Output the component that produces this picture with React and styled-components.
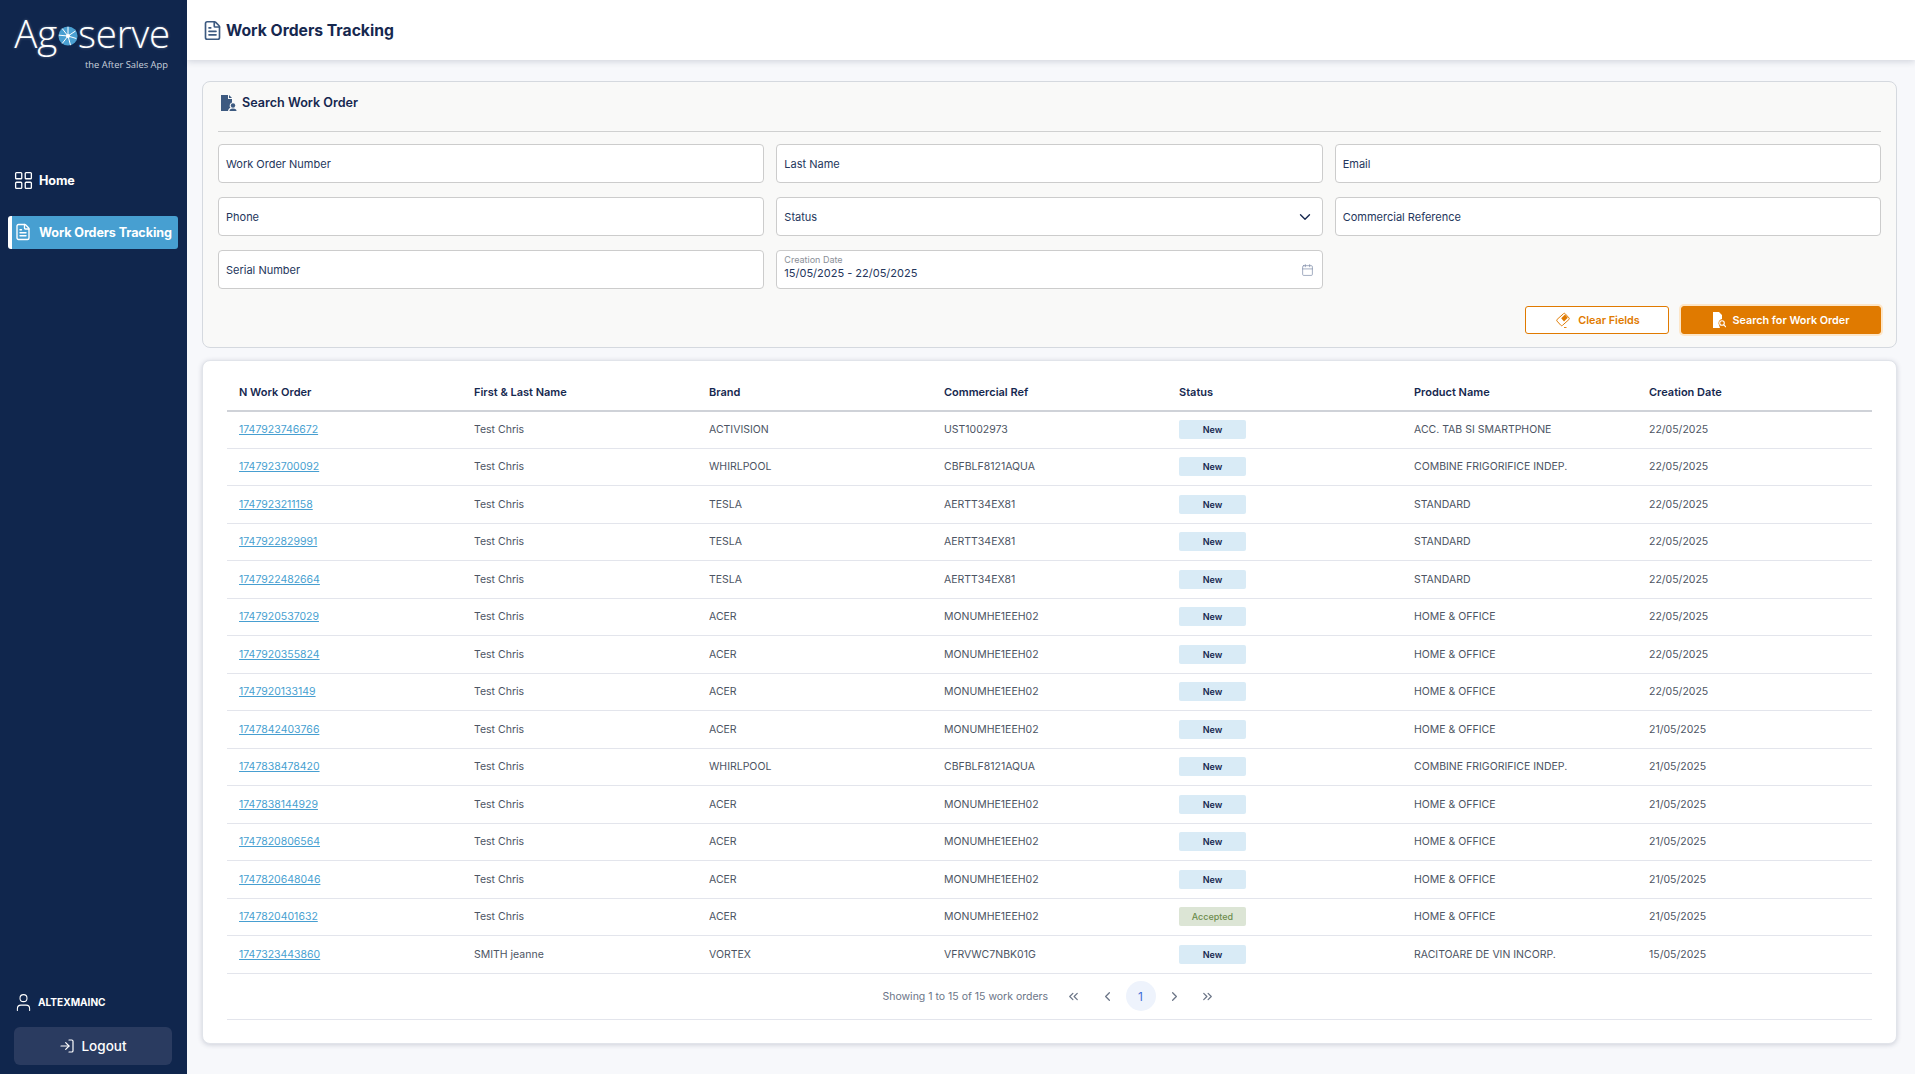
import styled, { createGlobalStyle } from "styled-components";
import {
  Calendar,
  ChevronDown,
  ChevronLeft,
  ChevronRight,
  ChevronsLeft,
  ChevronsRight,
  FileText,
  LayoutGrid,
  LogIn,
  User,
} from "lucide-react";

const orders = [
  ["1747923746672", "Test Chris", "ACTIVISION", "UST1002973", "New", "ACC. TAB SI SMARTPHONE", "22/05/2025"],
  ["1747923700092", "Test Chris", "WHIRLPOOL", "CBFBLF8121AQUA", "New", "COMBINE FRIGORIFICE INDEP.", "22/05/2025"],
  ["1747923211158", "Test Chris", "TESLA", "AERTT34EX81", "New", "STANDARD", "22/05/2025"],
  ["1747922829991", "Test Chris", "TESLA", "AERTT34EX81", "New", "STANDARD", "22/05/2025"],
  ["1747922482664", "Test Chris", "TESLA", "AERTT34EX81", "New", "STANDARD", "22/05/2025"],
  ["1747920537029", "Test Chris", "ACER", "MONUMHE1EEH02", "New", "HOME & OFFICE", "22/05/2025"],
  ["1747920355824", "Test Chris", "ACER", "MONUMHE1EEH02", "New", "HOME & OFFICE", "22/05/2025"],
  ["1747920133149", "Test Chris", "ACER", "MONUMHE1EEH02", "New", "HOME & OFFICE", "22/05/2025"],
  ["1747842403766", "Test Chris", "ACER", "MONUMHE1EEH02", "New", "HOME & OFFICE", "21/05/2025"],
  ["1747838478420", "Test Chris", "WHIRLPOOL", "CBFBLF8121AQUA", "New", "COMBINE FRIGORIFICE INDEP.", "21/05/2025"],
  ["1747838144929", "Test Chris", "ACER", "MONUMHE1EEH02", "New", "HOME & OFFICE", "21/05/2025"],
  ["1747820806564", "Test Chris", "ACER", "MONUMHE1EEH02", "New", "HOME & OFFICE", "21/05/2025"],
  ["1747820648046", "Test Chris", "ACER", "MONUMHE1EEH02", "New", "HOME & OFFICE", "21/05/2025"],
  ["1747820401632", "Test Chris", "ACER", "MONUMHE1EEH02", "Accepted", "HOME & OFFICE", "21/05/2025"],
  ["1747323443860", "SMITH jeanne", "VORTEX", "VFRVWC7NBK01G", "New", "RACITOARE DE VIN INCORP.", "15/05/2025"],
];

const columns = ["N Work Order", "First & Last Name", "Brand", "Commercial Ref", "Status", "Product Name", "Creation Date"];

const App = () => {
  return (
    <>
      <GlobalStyle />
      <Page>
        <Sidebar>
          <Logo>
            <LogoName>
              Ag
              <LogoBall viewBox="0 0 24 24">
                <circle cx="12" cy="12" r="11.5" fill="#4a9fd1" />
                <path d="M12 12L12 1M12 12L21 6M12 12L22 15M12 12L15 23M12 12L5 21M12 12L1 11M12 12L5 3" stroke="#fff" strokeWidth="1.2" />
                <circle cx="12" cy="12" r="2.5" fill="#fff" />
              </LogoBall>
              serve
            </LogoName>
            <LogoTag>the After Sales App</LogoTag>
          </Logo>
          <Menu>
            <MenuItem>
              <LayoutGrid size={21} strokeWidth={1.5} />
              Home
            </MenuItem>
            <MenuItem $active>
              <FileText size={18} strokeWidth={1.8} />
              Work Orders Tracking
            </MenuItem>
          </Menu>
          <SideFooter>
            <UserRow>
              <User size={21} strokeWidth={1.2} />
              ALTEXMAINC
            </UserRow>
            <LogoutButton>
              <LogIn size={16} strokeWidth={1.8} />
              Logout
            </LogoutButton>
          </SideFooter>
        </Sidebar>
        <Main>
          <TopBar>
            <FileText size={21} strokeWidth={1.9} color="#3d5a80" />
            <PageTitle>Work Orders Tracking</PageTitle>
          </TopBar>
          <Content>
            <SearchCard>
              <CardHeader>
                <DocUserIcon viewBox="0 0 16 18">
                  <path d="M0 1h7v4h4v3.4a3.4 3.4 0 0 0-1.6 5.4C8 14.4 7.2 15.5 7 17H0z" fill="#3d5a80" />
                  <path d="M8 1l3 3H8z" fill="#3d5a80" />
                  <circle cx="12" cy="11.5" r="2.2" fill="#3d5a80" />
                  <path d="M8.5 17c0-1.8 1-2.6 3.5-2.6s3.5.8 3.5 2.6z" fill="#3d5a80" />
                </DocUserIcon>
                <CardTitle>Search Work Order</CardTitle>
              </CardHeader>
              <FieldGrid>
                <Field>Work Order Number</Field>
                <Field>Last Name</Field>
                <Field>Email</Field>
                <Field>Phone</Field>
                <Field>
                  Status
                  <FieldIcon>
                    <ChevronDown size={18} strokeWidth={1.8} color="#16284f" />
                  </FieldIcon>
                </Field>
                <Field>Commercial Reference</Field>
                <Field>Serial Number</Field>
                <DateField>
                  <DateLabel>Creation Date</DateLabel>
                  15/05/2025 - 22/05/2025
                  <FieldIcon>
                    <Calendar size={13} strokeWidth={1.3} color="#7d8ca8" />
                  </FieldIcon>
                </DateField>
              </FieldGrid>
              <Actions>
                <ClearButton>
                  <svg width="18" height="18" viewBox="0 0 18 18">
                    <rect x="3.5" y="4.5" width="11" height="8" rx="1.2" transform="rotate(-42 9 8.5)" fill="none" stroke="#e07a00" strokeWidth="0.9" />
                    <path d="M11 3.6L13.8 6.8 10 10.4 7.2 7.2z" fill="#e07a00" />
                    <path d="M10 16.5h2.5" stroke="#e07a00" strokeWidth="0.9" />
                  </svg>
                  Clear Fields
                </ClearButton>
                <SearchButton>
                  <svg width="14" height="16" viewBox="0 0 14 16">
                    <path d="M1 0h6l3 3v4a4 4 0 0 0-3 6l1 3H1z" fill="#fff" />
                    <circle cx="10" cy="11" r="2.3" fill="none" stroke="#fff" strokeWidth="1.1" />
                    <path d="M11.8 12.8L14 15" stroke="#fff" strokeWidth="1.1" />
                  </svg>
                  Search for Work Order
                </SearchButton>
              </Actions>
            </SearchCard>
            <TableCard>
              <OrdersTable>
                <thead>
                  <tr>
                    {columns.map((name) => (
                      <HeadCell key={name}>{name}</HeadCell>
                    ))}
                  </tr>
                </thead>
                <tbody>
                  {orders.map((row) => (
                    <tr key={row[0]}>
                      <Cell>
                        <OrderLink href="#">{row[0]}</OrderLink>
                      </Cell>
                      <Cell>{row[1]}</Cell>
                      <Cell>{row[2]}</Cell>
                      <Cell>{row[3]}</Cell>
                      <Cell>
                        <StatusBadge $status={row[4]}>{row[4]}</StatusBadge>
                      </Cell>
                      <Cell>{row[5]}</Cell>
                      <Cell>{row[6]}</Cell>
                    </tr>
                  ))}
                </tbody>
              </OrdersTable>
              <Pagination>
                <PageInfo>Showing 1 to 15 of 15 work orders</PageInfo>
                <PageButton><ChevronsLeft size={15} /></PageButton>
                <PageButton><ChevronLeft size={15} /></PageButton>
                <PageButton $current>1</PageButton>
                <PageButton><ChevronRight size={15} /></PageButton>
                <PageButton><ChevronsRight size={15} /></PageButton>
              </Pagination>
            </TableCard>
          </Content>
        </Main>
      </Page>
    </>
  );
};

const GlobalStyle = createGlobalStyle`
  * {
    box-sizing: border-box;
  }
  body {
    margin: 0;
    background: #f7f8fb;
    font-family: "Inter", "Liberation Sans", sans-serif;
    color: #16284f;
  }
`;

const Page = styled.div`
  display: flex;
  height: 1074px;
  overflow: hidden;
`;

const Sidebar = styled.aside`
  display: flex;
  flex-direction: column;
  flex: 0 0 187px;
  background: #10264d;
  color: #fff;
`;

const Logo = styled.div`
  display: flex;
  flex-direction: column;
  align-items: flex-end;
  height: 147px;
  padding: 9px 17px 0 0;
`;

const LogoName = styled.div`
  display: flex;
  align-items: center;
  font-family: "Open Sans", sans-serif;
  font-weight: 300;
  font-size: 38.5px;
  line-height: 49px;
  letter-spacing: -0.2px;
  text-shadow: 0 0 3px rgba(255, 255, 255, 0.35);
`;

const LogoBall = styled.svg`
  width: 20px;
  height: 20px;
  margin: 5px 0 0 1px;
`;

const LogoTag = styled.div`
  margin-right: 2px;
  font-family: "Open Sans", sans-serif;
  font-size: 9.4px;
  line-height: 14px;
  color: #c8d0dc;
`;

const Menu = styled.nav`
  display: flex;
  flex-direction: column;
  gap: 18.5px;
  padding: 17px 9px 0 8px;
`;

const MenuItem = styled.a`
  display: flex;
  align-items: center;
  gap: ${(p) => (p.$active ? "7px" : "5.5px")};
  height: 33px;
  padding-left: ${(p) => (p.$active ? "2px" : "4.5px")};
  border-radius: 3px;
  border-left: ${(p) => (p.$active ? "4px solid #fff" : "0 none")};
  background: ${(p) => (p.$active ? "#479fd1" : "transparent")};
  font-size: 12.6px;
  font-weight: 700;
  white-space: nowrap;
  letter-spacing: -0.1px;
`;

const SideFooter = styled.div`
  margin-top: auto;
  padding: 0 15px 9px 14px;
`;

const UserRow = styled.div`
  display: flex;
  align-items: center;
  gap: 4.5px;
  height: 24px;
  margin: 0 0 13px -1.5px;
  font-size: 10.1px;
  font-weight: 700;
`;

const LogoutButton = styled.button`
  display: flex;
  align-items: center;
  justify-content: center;
  gap: 6px;
  width: 100%;
  height: 38px;
  border: 0;
  border-radius: 6px;
  background: #2a3b60;
  color: #fff;
  font-family: inherit;
  font-size: 13.5px;
  font-weight: 500;
`;

const Main = styled.main`
  display: flex;
  flex-direction: column;
  flex: 1;
  min-width: 0;
`;

const TopBar = styled.header`
  display: flex;
  align-items: center;
  gap: 3.5px;
  height: 60px;
  padding: 0 0 0 14.5px;
  background: #fff;
  box-shadow: 0 2px 6px rgba(40, 50, 80, 0.16);
`;

const PageTitle = styled.h1`
  margin: 0;
  font-size: 15.7px;
  font-weight: 700;
`;

const Content = styled.div`
  display: flex;
  flex-direction: column;
  gap: 12px;
  padding: 21px 18px 0 15px;
`;

const SearchCard = styled.section`
  height: 267px;
  padding: 0 15px 0 15px;
  background: #f9f9f8;
  border: 1px solid #d5d9df;
  border-radius: 8px;
`;

const CardHeader = styled.div`
  display: flex;
  align-items: center;
  gap: 5px;
  height: 50px;
  padding: 0 0 8px 3px;
  margin-bottom: 12px;
  border-bottom: 1px solid #cfd0d0;
`;

const DocUserIcon = styled.svg`
  width: 16px;
  height: 18px;
`;

const CardTitle = styled.h2`
  margin: 0;
  font-size: 12.6px;
  font-weight: 600;
`;

const FieldGrid = styled.div`
  display: grid;
  grid-template-columns: repeat(3, 1fr);
  gap: 14px 12px;
`;

const Field = styled.div`
  position: relative;
  display: flex;
  align-items: center;
  height: 39px;
  padding: 0 8px 0 7px;
  background: #fff;
  border: 1px solid #ccc;
  border-radius: 4px;
  font-size: 11px;
  color: #24365c;
`;

const DateField = styled(Field)`
  flex-direction: column;
  align-items: flex-start;
  justify-content: flex-end;
  padding-bottom: 8px;
  line-height: 14px;
`;

const DateLabel = styled.span`
  font-size: 9px;
  line-height: 12px;
  color: #8a8f98;
`;

const FieldIcon = styled.span`
  position: absolute;
  top: 50%;
  right: 8px;
  display: flex;
  transform: translateY(-50%);
`;

const Actions = styled.div`
  display: flex;
  justify-content: flex-end;
  gap: 12px;
  margin-top: 17px;
`;

const ClearButton = styled.button`
  display: flex;
  align-items: center;
  justify-content: center;
  gap: 6px;
  width: 144px;
  height: 28px;
  background: #fff;
  border: 1px solid #e07a00;
  border-radius: 3px;
  color: #e07a00;
  font-family: inherit;
  font-size: 10.8px;
  font-weight: 600;
`;

const SearchButton = styled(ClearButton)`
  width: 200px;
  background: #e07a00;
  color: #fff;
  box-shadow: 0 0 0 2px #fde6c8;
`;

const TableCard = styled.section`
  height: 684px;
  padding: 15px 24px 0 24px;
  background: #fff;
  border: 1px solid #e1e4ea;
  border-radius: 8px;
  box-shadow: 0 1px 5px rgba(40, 50, 80, 0.2);
`;

const OrdersTable = styled.table`
  width: 100%;
  border-collapse: collapse;
  table-layout: fixed;
`;

const HeadCell = styled.th`
  height: 34.5px;
  padding: 0 0 1.5px 12px;
  border-bottom: 2px solid #cfd2d8;
  text-align: left;
  font-size: 11px;
  font-weight: 600;
`;

const Cell = styled.td`
  height: 37.5px;
  padding: 0 0 0 12px;
  border-bottom: 1px solid #e3e5ec;
  font-size: 10.5px;
  color: #4c5463;
`;

const OrderLink = styled.a`
  color: #479fd1;
  text-decoration: underline;
`;

const StatusBadge = styled.span`
  display: flex;
  align-items: center;
  justify-content: center;
  width: 67px;
  height: 19px;
  border-radius: 2px;
  background: ${(p) => (p.$status === "Accepted" ? "#dce5d5" : "#d9ebf6")};
  color: ${(p) => (p.$status === "Accepted" ? "#6d8c4c" : "#16284f")};
  font-size: 9px;
  font-weight: ${(p) => (p.$status === "Accepted" ? 500 : 600)};
`;

const Pagination = styled.div`
  display: flex;
  align-items: center;
  justify-content: center;
  gap: 3.5px;
  height: 46px;
  border-bottom: 1px solid #e3e5ec;
  padding-left: 6px;
`;

const PageInfo = styled.span`
  margin-right: 7px;
  font-size: 10.5px;
  color: #6b7587;
`;

const PageButton = styled.span`
  display: flex;
  align-items: center;
  justify-content: center;
  width: 30px;
  height: 30px;
  border-radius: 50%;
  background: ${(p) => (p.$current ? "#eef3fc" : "transparent")};
  color: ${(p) => (p.$current ? "#3f6fd8" : "#6b7587")};
  font-size: 12px;
`;

export default App;
